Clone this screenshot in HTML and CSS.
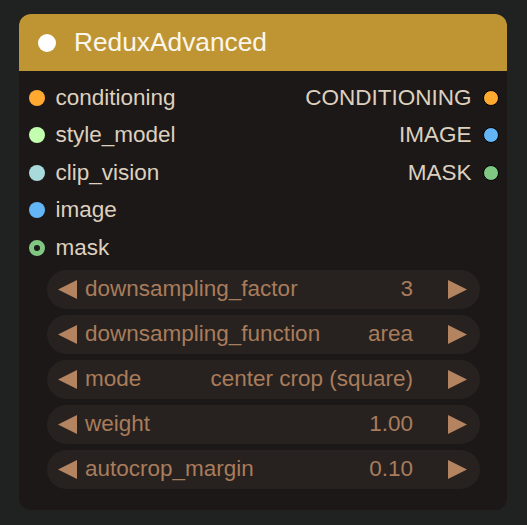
FILE: index.html
```html
<!DOCTYPE html>
<html>
<head>
<meta charset="utf-8">
<link rel="stylesheet" href="styles.css">
</head>
<body>
<div class="node">
  <div class="title">
    <span class="title-dot"></span>
    <span class="title-text">ReduxAdvanced</span>
  </div>
  <div class="body">
    <div class="io">
      <div class="row">
        <div class="in"><span class="dot c-orange"></span><span class="lbl">conditioning</span></div>
        <div class="out"><span class="lbl">CONDITIONING</span><span class="dot bordered c-orange"></span></div>
      </div>
      <div class="row">
        <div class="in"><span class="dot c-lime"></span><span class="lbl">style_model</span></div>
        <div class="out"><span class="lbl">IMAGE</span><span class="dot bordered c-blue"></span></div>
      </div>
      <div class="row">
        <div class="in"><span class="dot c-teal"></span><span class="lbl">clip_vision</span></div>
        <div class="out"><span class="lbl">MASK</span><span class="dot bordered c-green"></span></div>
      </div>
      <div class="row">
        <div class="in"><span class="dot c-blue"></span><span class="lbl">image</span></div>
      </div>
      <div class="row">
        <div class="in"><span class="dot ring"></span><span class="lbl">mask</span></div>
      </div>
    </div>
    <div class="widgets">
      <div class="widget">
        <svg class="arrow" viewBox="0 0 19 19"><polygon points="19,0 19,19 0,9.5"/></svg>
        <span class="wname">downsampling_factor</span>
        <span class="wval">3</span>
        <svg class="arrow" viewBox="0 0 19 19"><polygon points="0,0 0,19 19,9.5"/></svg>
      </div>
      <div class="widget">
        <svg class="arrow" viewBox="0 0 19 19"><polygon points="19,0 19,19 0,9.5"/></svg>
        <span class="wname">downsampling_function</span>
        <span class="wval">area</span>
        <svg class="arrow" viewBox="0 0 19 19"><polygon points="0,0 0,19 19,9.5"/></svg>
      </div>
      <div class="widget">
        <svg class="arrow" viewBox="0 0 19 19"><polygon points="19,0 19,19 0,9.5"/></svg>
        <span class="wname">mode</span>
        <span class="wval">center crop (square)</span>
        <svg class="arrow" viewBox="0 0 19 19"><polygon points="0,0 0,19 19,9.5"/></svg>
      </div>
      <div class="widget">
        <svg class="arrow" viewBox="0 0 19 19"><polygon points="19,0 19,19 0,9.5"/></svg>
        <span class="wname">weight</span>
        <span class="wval">1.00</span>
        <svg class="arrow" viewBox="0 0 19 19"><polygon points="0,0 0,19 19,9.5"/></svg>
      </div>
      <div class="widget">
        <svg class="arrow" viewBox="0 0 19 19"><polygon points="19,0 19,19 0,9.5"/></svg>
        <span class="wname">autocrop_margin</span>
        <span class="wval">0.10</span>
        <svg class="arrow" viewBox="0 0 19 19"><polygon points="0,0 0,19 19,9.5"/></svg>
      </div>
    </div>
  </div>
</div>
</body>
</html>
```

FILE: styles.css
```css
html, body {
  margin: 0;
  padding: 0;
  background: #202121;
}
body {
  padding: 14px 0 0 19px;
  font-family: "Liberation Sans", Arial, sans-serif;
}
.node {
  width: 488px;
  height: 496px;
  border-radius: 12px;
  background: #1c1817;
  overflow: hidden;
  box-sizing: border-box;
}
.title {
  height: 57px;
  background: #bf9533;
  display: flex;
  align-items: center;
  padding-left: 19px;
  box-sizing: border-box;
}
.title-dot {
  width: 18px;
  height: 18px;
  border-radius: 50%;
  background: #ffffff;
  flex: none;
}
.title-text {
  margin-left: 18px;
  color: #fbf6ec;
  font-size: 26.3px;
  line-height: 1;
}
.body {
  padding-top: 8px;
}
.row {
  height: 37.5px;
  display: flex;
  align-items: center;
  justify-content: space-between;
}
.in, .out {
  display: flex;
  align-items: center;
}
.in {
  padding-left: 10px;
}
.out {
  padding-right: 8.5px;
}
.lbl {
  color: #ddd0bf;
  font-size: 22.5px;
  line-height: 1;
}
.in .lbl {
  margin-left: 10.5px;
}
.out .lbl {
  margin-right: 11px;
}
.dot {
  width: 16px;
  height: 16px;
  border-radius: 50%;
  box-sizing: border-box;
  flex: none;
}
.dot.bordered {
  border: 1.5px solid #000;
}
.c-orange { background: #ffa931; }
.c-lime { background: #c2ffae; }
.c-teal { background: #a8dadc; }
.c-blue { background: #64b5f6; }
.c-green { background: #81c784; }
.dot.ring {
  background: #1c1817;
  border: 5.5px solid #81c784;
}
.widgets {
  margin-top: 3px;
  padding: 0 27px 0 27.5px;
  display: flex;
  flex-direction: column;
  gap: 6px;
}
.widget {
  height: 39px;
  border-radius: 19.5px;
  background: #27221f;
  display: flex;
  align-items: center;
  padding: 0 13px 0 11.5px;
  font-size: 22.5px;
  color: #a97c5c;
}
.arrow {
  width: 19px;
  height: 19px;
  fill: #b4835f;
  flex: none;
}
.wname {
  margin-left: 8px;
  flex: 1;
  white-space: nowrap;
}
.wval {
  margin-right: 35px;
  white-space: nowrap;
}
```
